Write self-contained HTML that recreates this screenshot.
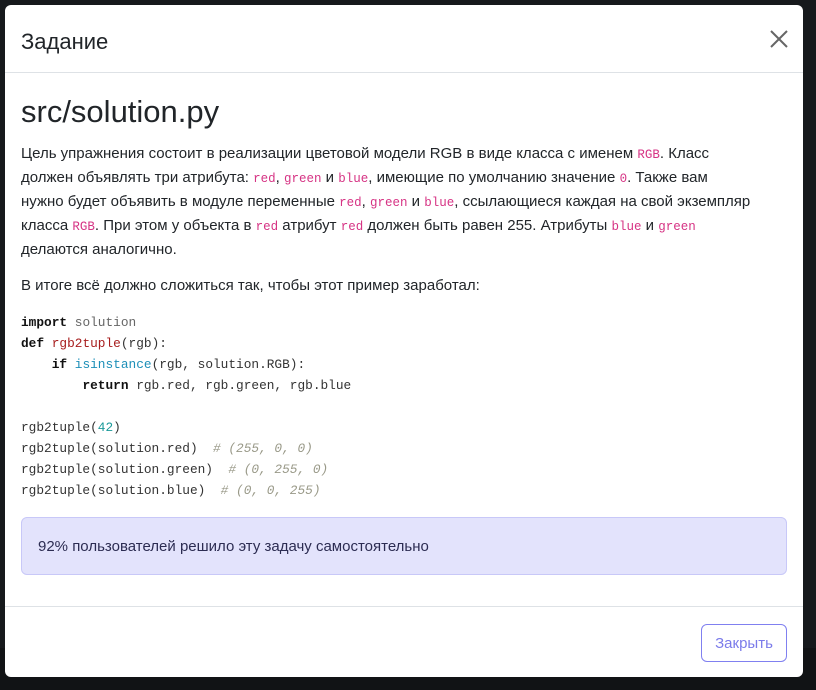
<!DOCTYPE html>
<html><head><meta charset="utf-8"><style>
*{box-sizing:border-box}
body{margin:0;width:816px;height:690px;background:#111315;font-family:"Liberation Sans",sans-serif;color:#212529;overflow:hidden;position:relative}
.bg{position:absolute;left:0;top:0;width:816px;height:648px;background:#16191c}
.modal{position:absolute;left:5px;top:5px;width:798px;height:672px;background:#fff;border-radius:6px;overflow:hidden}
.hd{height:68px;border-bottom:1px solid #dee2e6;position:relative}
.hd h5{margin:0;position:absolute;left:16px;top:24px;font-size:22px;font-weight:normal;color:#212529}
.x{position:absolute;right:14px;top:24px}
.bd{padding:16px 16px 0 16px}
h1{margin:3px 0 10px;font-size:31px;font-weight:normal;line-height:40px}
p{margin:0 0 12px;font-size:15px;line-height:24px;white-space:nowrap}
code{font-family:"Liberation Mono",monospace;font-size:12.5px;color:#d63384;line-height:1}
pre{margin:14px 0 16px;font-family:"Liberation Mono",monospace;font-size:12.8px;line-height:21px;color:#333}
.k{font-weight:bold;color:#111}.f{color:#a71d1d}.b{color:#1d8fb8}.n{color:#1a9999}.c{color:#999988;font-style:italic}.g{color:#666}
.al{height:58px;background:#e3e3fc;border:1px solid #c8c8f8;border-radius:6px;padding:0 16px;line-height:58px;font-size:15px;color:#2c2c52}
.ft{position:absolute;left:0;right:0;top:601px;border-top:1px solid #dee2e6;height:71px}
.btn{position:absolute;right:16px;top:17px;width:86px;height:38px;border:1px solid #8080f0;border-radius:6px;color:#7b7bea;font-size:15px;text-align:center;line-height:38px}
</style></head><body><div class="bg"></div>
<div class="modal">
<div class="hd"><h5>Задание</h5><svg class="x" width="20" height="20" viewBox="0 0 20 20"><path d="M2 2L18 18M18 2L2 18" stroke="#666" stroke-width="2"/></svg></div>
<div class="bd">
<h1>src/solution.py</h1>
<p>Цель упражнения состоит в реализации цветовой модели RGB в виде класса с именем <code>RGB</code>. Класс<br>должен объявлять три атрибута: <code>red</code>, <code>green</code> и <code>blue</code>, имеющие по умолчанию значение <code>0</code>. Также вам<br>нужно будет объявить в модуле переменные <code>red</code>, <code>green</code> и <code>blue</code>, ссылающиеся каждая на свой экземпляр<br>класса <code>RGB</code>. При этом у объекта в <code>red</code> атрибут <code>red</code> должен быть равен 255. Атрибуты <code>blue</code> и <code>green</code><br>делаются аналогично.</p>
<p style="margin:0">В итоге всё должно сложиться так, чтобы этот пример заработал:</p>
<pre><span class="k">import</span> <span class="g">solution</span>
<span class="k">def</span> <span class="f">rgb2tuple</span>(rgb):
    <span class="k">if</span> <span class="b">isinstance</span>(rgb, solution.RGB):
        <span class="k">return</span> rgb.red, rgb.green, rgb.blue

rgb2tuple(<span class="n">42</span>)
rgb2tuple(solution.red)  <span class="c"># (255, 0, 0)</span>
rgb2tuple(solution.green)  <span class="c"># (0, 255, 0)</span>
rgb2tuple(solution.blue)  <span class="c"># (0, 0, 255)</span></pre>
<div class="al">92% пользователей решило эту задачу самостоятельно</div>
</div>
<div class="ft"><div class="btn">Закрыть</div></div>
</div>
</body></html>
